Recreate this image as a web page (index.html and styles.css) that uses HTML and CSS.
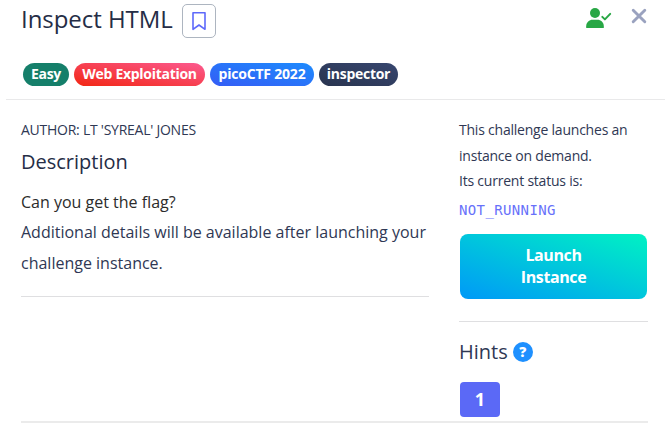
FILE: index.html
```html
<!DOCTYPE html>
<html lang="en">
<head>
<meta charset="utf-8">
<title>Inspect HTML</title>
<link rel="stylesheet" href="styles.css">
</head>
<body>
<div class="modal">
  <header class="header">
    <div class="title-row">
      <h1 class="title"><span>Inspect HTML</span></h1>
      <button class="bookmark" aria-label="Bookmark">
        <svg width="16" height="20" viewBox="0 0 16 20"><path d="M2 1.8H14V18.3L8 14L2 18.3Z" fill="none" stroke="#5e69fa" stroke-width="1.6" stroke-linejoin="round"/></svg>
      </button>
      <div class="actions">
        <svg class="solved" width="26" height="21" viewBox="0 0 26 21"><circle cx="9" cy="5" r="5" fill="#28a745"/><path d="M0.2 20V18.2C0.2 14.4 3.4 11.8 6.6 11.8H11.4C14.8 11.8 17.8 14.4 17.8 18.2V20Z" fill="#28a745"/><path d="M16.3 8.9L18.9 11.4L24.2 5.9" fill="none" stroke="#28a745" stroke-width="2" stroke-linecap="round" stroke-linejoin="round"/></svg>
        <svg class="close" width="16" height="16" viewBox="0 0 16 16"><path d="M2.2 2.2L13.8 13.8M13.8 2.2L2.2 13.8" stroke="#9aa2bf" stroke-width="2.9" stroke-linecap="round"/></svg>
      </div>
    </div>
    <div class="tags">
      <span class="tag easy">Easy</span>
      <span class="tag web">Web Exploitation</span>
      <span class="tag event">picoCTF 2022</span>
      <span class="tag topic">inspector</span>
    </div>
  </header>
  <main class="body">
    <section class="details">
      <div class="author">AUTHOR: LT 'SYREAL' JONES</div>
      <h2 class="heading">Description</h2>
      <p class="text dark">Can you get the flag?</p>
      <p class="text">Additional details will be available after launching your<br>challenge instance.</p>
      <hr class="rule">
    </section>
    <aside class="side">
      <p class="note">This challenge launches an<br>instance on demand.<br>Its current status is:</p>
      <code class="status">NOT_RUNNING</code>
      <button class="launch">Launch<br>Instance</button>
      <hr class="rule">
      <h2 class="hints">Hints <span class="help">?</span></h2>
      <button class="hint">1</button>
    </aside>
  </main>
  <hr class="bottom">
</div>
</body>
</html>
```
FILE: styles.css
```css
* { box-sizing: border-box; margin: 0; padding: 0; }
body { width: 665px; height: 423px; overflow: hidden; background: #fff; color: #2f3854; font-family: "Open Sans", sans-serif; }
button { font-family: inherit; }
.header { height: 100px; margin-left: 6px; padding-left: 15px; border-bottom: 1px solid #e9e9ea; }
.title-row { display: flex; align-items: flex-start; height: 63px; }
.title { width: 161px; font-size: 24px; font-weight: 400; line-height: 38px; letter-spacing: -0.05px; color: #252d46; white-space: nowrap; }
.bookmark { width: 34px; height: 34px; margin-top: 4px; display: flex; align-items: center; justify-content: center; background: #fff; border: 1px solid #adb5c0; border-radius: 5px; }
.actions { display: flex; margin-left: auto; margin-right: 18px; padding-top: 8px; gap: 19px; }
.tags { display: flex; gap: 5px; padding-left: 2px; }
.tag { height: 23px; border-radius: 12px; font-size: 14px; font-weight: 700; line-height: 22px; letter-spacing: -0.28px; color: #fff; text-align: center; white-space: nowrap; }
.easy { width: 46px; background: #157f6a; }
.web { width: 131px; background: linear-gradient(to top right, #f22613, #fc5a90); }
.event { width: 104px; letter-spacing: -0.2px; background: linear-gradient(to top right, #355cf5, #1d8bfd); }
.topic { width: 79px; background: linear-gradient(to top right, #29344f, #37466f); }
.body { display: flex; gap: 30px; height: 321px; padding-left: 21px; }
.details { width: 408px; padding-top: 20px; }
.author { font-size: 14px; line-height: 20px; letter-spacing: -0.25px; }
.heading { margin-top: 8px; font-size: 20px; font-weight: 400; line-height: 28px; color: #252d46; }
.text { font-size: 16px; line-height: 31px; white-space: nowrap; }
.dark { margin-top: 11px; line-height: 30px; color: #2b2b2b; }
.rule { border: 0; height: 1px; background: #dfdfe1; }
.details .rule { margin-top: 17px; }
.side { width: 189px; padding-top: 17px; }
.note { font-size: 14px; line-height: 25.5px; letter-spacing: -0.22px; white-space: nowrap; }
.status { display: block; margin-top: 6px; font: 14px/20px "DejaVu Sans Mono", monospace; letter-spacing: 0.37px; color: #6771fa; }
.launch { display: block; width: 187px; height: 65px; margin: 14px 0 22px 1px; border: 0; border-radius: 8px; background: linear-gradient(to top right, #0099f7, #00f2c3); color: #fff; font-size: 16px; font-weight: 700; line-height: 22px; letter-spacing: -0.4px; }
.hints { display: flex; align-items: center; gap: 5px; margin-top: 16px; font-size: 20px; font-weight: 400; line-height: 28px; }
.help { width: 20px; height: 20px; border-radius: 50%; background: #1e90ff; color: #fff; font-size: 14px; font-weight: 800; line-height: 20px; text-align: center; }
.hint { display: block; width: 40px; height: 35px; margin: 16px 0 0 1px; border: 0; border-radius: 4px; background: #5b69f6; color: #fff; font-size: 18px; font-weight: 700; line-height: 35px; }
.bottom { width: 627px; height: 2px; margin-left: 21px; border: 0; background: #ebebeb; }
```
